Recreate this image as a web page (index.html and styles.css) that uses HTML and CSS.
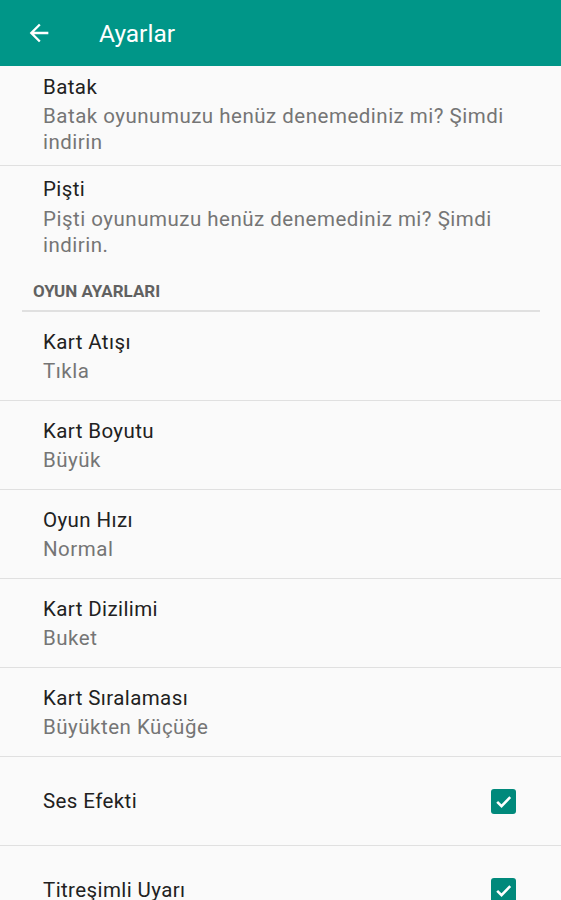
FILE: index.html
```html
<!DOCTYPE html>
<html lang="tr">
  <head>
    <meta charset="UTF-8" />
    <meta name="viewport" content="width=device-width, initial-scale=1.0" />
    <title>Ayarlar</title>
    <link rel="stylesheet" href="styles.css">
  </head>

  <body>
    <div class="toolbar">
      <svg class="back" viewBox="0 0 24 24">
        <path d="M20 11H7.83l5.59-5.59L12 4l-8 8 8 8 1.41-1.41L7.83 13H20v-2z" fill="#ffffff" />
      </svg>
      <span class="toolbar-title">Ayarlar</span>
    </div>

    <div class="list">
      <div class="pref pref-top first">
        <div class="pref-title">Batak</div>
        <div class="pref-summary">Batak oyunumuzu henüz denemediniz mi? Şimdi indirin</div>
      </div>
      <div class="pref pref-top last">
        <div class="pref-title">Pişti</div>
        <div class="pref-summary">Pişti oyunumuzu henüz denemediniz mi? Şimdi indirin.</div>
      </div>

      <div class="category">OYUN AYARLARI</div>

      <div class="pref">
        <div class="pref-title">Kart Atışı</div>
        <div class="pref-summary">Tıkla</div>
      </div>
      <div class="pref">
        <div class="pref-title">Kart Boyutu</div>
        <div class="pref-summary">Büyük</div>
      </div>
      <div class="pref">
        <div class="pref-title">Oyun Hızı</div>
        <div class="pref-summary">Normal</div>
      </div>
      <div class="pref">
        <div class="pref-title">Kart Dizilimi</div>
        <div class="pref-summary">Buket</div>
      </div>
      <div class="pref">
        <div class="pref-title">Kart Sıralaması</div>
        <div class="pref-summary">Büyükten Küçüğe</div>
      </div>
      <div class="pref pref-check">
        <div class="pref-title">Ses Efekti</div>
        <span class="checkbox">
          <svg width="19" height="19" viewBox="0 0 24 24"><polyline points="4,12.5 9.5,18 20.5,6.5" fill="none" stroke="#ffffff" stroke-width="3.2" /></svg>
        </span>
      </div>
      <div class="pref pref-check">
        <div class="pref-title">Titreşimli Uyarı</div>
        <span class="checkbox">
          <svg width="19" height="19" viewBox="0 0 24 24"><polyline points="4,12.5 9.5,18 20.5,6.5" fill="none" stroke="#ffffff" stroke-width="3.2" /></svg>
        </span>
      </div>
    </div>
  </body>
</html>
```

FILE: styles.css
```css
body {
  margin: 0;
  font-family: Roboto, "Noto Sans", Arial, sans-serif;
  background-color: #fafafa;
  overflow: hidden;
}

.toolbar {
  height: 66px;
  background-color: #009688;
  display: flex;
  align-items: center;
  padding-left: 25px;
  box-sizing: border-box;
}

.back {
  width: 28px;
  height: 28px;
}

.toolbar-title {
  color: #ffffff;
  font-size: 24.5px;
  margin-left: 46px;
}

.pref {
  padding: 0 20px 0 43px;
  border-bottom: 1px solid #e0e0e0;
  height: 88px;
  display: flex;
  flex-direction: column;
  justify-content: center;
}

.pref-top {
  height: auto;
  justify-content: flex-start;
}

.pref-top.first {
  padding-top: 7px;
  padding-bottom: 10px;
}

.pref-top.last {
  border-bottom: none;
  padding-top: 9px;
  padding-bottom: 0;
}

.pref-title {
  font-size: 20.5px;
  color: #212121;
  line-height: 28px;
  letter-spacing: 0.4px;
}

.pref-summary {
  font-size: 20.5px;
  color: #757575;
  line-height: 26px;
  letter-spacing: 0.5px;
  padding-right: 25px;
  margin-top: 2px;
}

.last .pref-summary {
  margin-top: 3px;
}

.category {
  margin: 0 21px 0 22px;
  padding: 23px 0 9px 11px;
  line-height: 20px;
  font-size: 17px;
  font-weight: bold;
  color: #616161;
  border-bottom: 2px solid #e0e0e0;
}

.pref-check {
  flex-direction: row;
  align-items: center;
  justify-content: space-between;
  padding-right: 45px;
}

.checkbox {
  width: 25px;
  height: 25px;
  border-radius: 3px;
  background-color: #00897b;
  display: flex;
  align-items: center;
  justify-content: center;
}
```
